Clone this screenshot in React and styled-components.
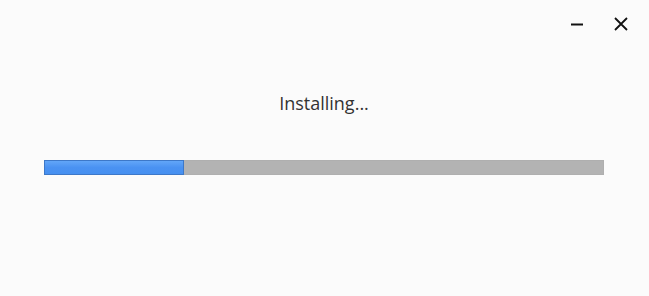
import React from 'react';
import styled, {createGlobalStyle} from 'styled-components';

const GlobalStyle = createGlobalStyle`
    html, body {
        margin: 0;
        padding: 0;
        background-color: #fbfbfb;
    }
    body {
        font-family: "Open Sans", "Noto Sans", sans-serif;
        overflow: hidden;
    }
`;

const Window = styled.div`
    width: 649px;
    height: 296px;
    display: flex;
    flex-direction: column;
    background-color: #fbfbfb;
`;

const TitleBar = styled.div`
    height: 48px;
    display: flex;
    justify-content: flex-end;
    align-items: center;
    padding-right: 6px;
`;

const WindowButton = styled.button`
    width: 44px;
    height: 48px;
    border: none;
    background: transparent;
    padding: 0;
    display: flex;
    align-items: center;
    justify-content: center;
    cursor: pointer;
`;

const Content = styled.div`
    display: flex;
    flex-direction: column;
    align-items: center;
    padding: 43px 45px 0 44px;
`;

const Status = styled.div`
    font-size: 18px;
    line-height: 24px;
    color: #333333;
`;

const Track = styled.div`
    margin-top: 45px;
    align-self: stretch;
    height: 15px;
    box-sizing: border-box;
    background-color: #b3b3b3;
    border: 1px solid #afafaf;
    display: flex;
`;

const Fill = styled.div`
    height: 15px;
    margin: -1px 0 0 -1px;
    box-sizing: border-box;
    border: 1px solid #3d78c8;
    background: linear-gradient(#62a6f8, #4a92f2 50%, #4690f0);
`;

const App = () => {
    const progress = 0.25; // 설치 진행률

    return (
        <Window>
            <GlobalStyle />
            <TitleBar>
                <WindowButton aria-label="minimize">
                    <svg width="14" height="14" viewBox="0 0 14 14">
                        <path d="M1 7.5h12" stroke="#111" strokeWidth="2" />
                    </svg>
                </WindowButton>
                <WindowButton aria-label="close">
                    <svg width="14" height="14" viewBox="0 0 14 14">
                        <path d="M1 1l12 12M13 1L1 13" stroke="#111" strokeWidth="1.8" />
                    </svg>
                </WindowButton>
            </TitleBar>
            <Content>
                <Status>Installing...</Status>
                <Track>
                    <Fill style={{width: `${progress * 100}%`}} />
                </Track>
            </Content>
        </Window>
    );
};

export default App;
